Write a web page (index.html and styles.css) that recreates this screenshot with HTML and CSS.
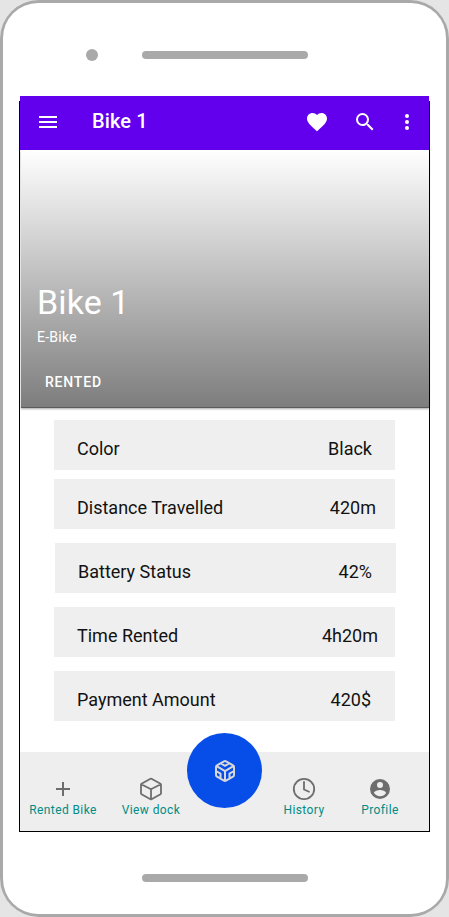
FILE: index.html
```html
<!DOCTYPE html>
<html lang="en">
<head>
<meta charset="utf-8">
<title>Bike 1</title>
<link rel="stylesheet" href="styles.css">
</head>
<body>
<div class="phone">
  <div class="phone-body">
    <div class="phone-top"><span class="camera"></span><span class="speaker"></span></div>
    <main class="screen">
      <header class="app-bar">
        <svg class="icon menu" viewBox="0 0 24 24"><path d="M3 18h18v-2H3v2zm0-5h18v-2H3v2zm0-7v2h18V6H3z"/></svg>
        <h1 class="app-title">Bike 1</h1>
        <svg class="icon heart" viewBox="0 0 24 24"><path d="M12 21.35l-1.45-1.32C5.4 15.36 2 12.28 2 8.5 2 5.42 4.42 3 7.5 3c1.74 0 3.41.81 4.5 2.09C13.09 3.81 14.76 3 16.5 3 19.58 3 22 5.42 22 8.5c0 3.78-3.4 6.86-8.55 11.54L12 21.35z"/></svg>
        <svg class="icon search" viewBox="0 0 24 24"><path d="M15.5 14h-.79l-.28-.27A6.47 6.47 0 0 0 16 9.5 6.5 6.5 0 1 0 9.5 16c1.61 0 3.09-.59 4.23-1.57l.27.28v.79l5 4.99L20.49 19l-4.99-5zm-6 0a4.5 4.5 0 1 1 0-9 4.5 4.5 0 0 1 0 9z"/></svg>
        <svg class="icon more" viewBox="0 0 24 24"><path d="M12 8a2 2 0 1 0 0-4 2 2 0 0 0 0 4zm0 2a2 2 0 1 0 0 4 2 2 0 0 0 0-4zm0 6a2 2 0 1 0 0 4 2 2 0 0 0 0-4z"/></svg>
      </header>
      <section class="hero">
        <h2 class="hero-title">Bike 1</h2>
        <p class="hero-sub">E-Bike</p>
        <span class="hero-action">RENTED</span>
      </section>
      <section class="details">
        <div class="row color"><span>Color</span><span>Black</span></div>
        <div class="row distance"><span>Distance Travelled</span><span>420m</span></div>
        <div class="row battery"><span>Battery Status</span><span>42%</span></div>
        <div class="row time"><span>Time Rented</span><span>4h20m</span></div>
        <div class="row payment"><span>Payment Amount</span><span>420$</span></div>
      </section>
      <nav class="bottom-nav">
        <a class="nav-item rented"><svg class="icon" viewBox="0 0 24 24"><path d="M19 13h-6v6h-2v-6H5v-2h6V5h2v6h6v2z"/></svg><span>Rented Bike</span></a>
        <a class="nav-item dock"><svg class="icon line" viewBox="0 0 24 24"><path d="M22 16.3V7.700a1 1 0 0 0-.5-.9l-9-5.100a1 1 0 0 0-1 0l-9 5.100a1 1 0 0 0-.5.9v8.600a1 1 0 0 0 .5.9l9 5.100a1 1 0 0 0 1 0l9-5.100a1 1 0 0 0 .5-.9zM2.300 7.200L12 12.200l9.700-5M12 22V12.200"/></svg><span>View dock</span></a>
        <a class="fab"><svg class="icon line" viewBox="0 0 24 24"><path d="M21 16V8a2 2 0 0 0-1-1.730l-7-4a2 2 0 0 0-2 0l-7 4A2 2 0 0 0 3 8v8a2 2 0 0 0 1 1.730l7 4a2 2 0 0 0 2 0l7-4A2 2 0 0 0 21 16zM7.500 4.210L12 6.810l4.500-2.600M7.500 19.790V14.600L3 12M21 12l-4.500 2.600v5.190M3.270 6.960L12 12.010l8.730-5.050M12 22.080V12"/></svg></a>
        <a class="nav-item history"><svg class="icon line" viewBox="0 0 24 24"><circle cx="12" cy="12" r="10.200"/><path d="M12 5v7.500l5 2.200"/></svg><span>History</span></a>
        <a class="nav-item profile"><svg class="icon" viewBox="0 0 24 24"><path d="M12 2a10 10 0 1 0 0 20 10 10 0 0 0 0-20zm0 3a3 3 0 1 1 0 6 3 3 0 0 1 0-6zm0 14.200c-2.500 0-4.710-1.280-6-3.220.03-1.990 4-3.080 6-3.080s5.970 1.090 6 3.080a7.200 7.200 0 0 1-6 3.220z"/></svg><span>Profile</span></a>
      </nav>
    </main>
    <span class="speaker bottom"></span>
  </div>
</div>
</body>
</html>
```
FILE: styles.css
```css
* { box-sizing: border-box; }

body {
  margin: 0;
  background: #e5e5e5;
  font-family: Roboto, sans-serif;
}

h1, h2, p { margin: 0; }

.phone {
  width: 449px;
  height: 917px;
  padding: 3px;
  border-radius: 39px;
  background: #a9a9a9;
}

.phone-body {
  height: 911px;
  border-radius: 35px;
  background: #fff;
  display: flex;
  flex-direction: column;
  padding-left: 16px;
}

.phone-top {
  height: 98px;
  flex: none;
  display: flex;
  align-items: flex-start;
  padding: 46px 0 0 67px;
}

.camera {
  width: 12px;
  height: 12px;
  border-radius: 50%;
  background: #a9a9a9;
}

.speaker {
  width: 166px;
  height: 8px;
  margin: 2px 0 0 44px;
  border-radius: 4px;
  background: #a9a9a9;
}

.speaker.bottom { margin: 42px 0 0 123px; }

.screen {
  width: 411px;
  height: 731px;
  flex: none;
  border: 1px solid #000;
  display: flex;
  flex-direction: column;
}

.icon {
  width: 24px;
  height: 24px;
  flex: none;
  display: block;
  fill: currentColor;
}

.icon.line {
  fill: none;
  stroke: currentColor;
  stroke-width: 1.8;
  stroke-linejoin: round;
  stroke-linecap: round;
}

.fab .icon.line { stroke-width: 2; }

.app-bar {
  height: 54px;
  flex: none;
  margin-top: -6px;
  padding: 0 10px 2px 16px;
  display: flex;
  align-items: center;
  background: #6200ee;
  color: #fff;
}

.app-title {
  flex: 1;
  margin: 0 0 2px 32px;
  font-size: 20px;
  line-height: 24px;
  font-weight: 500;
  letter-spacing: .1px;
}

.heart { margin-right: 24px; }
.search { margin-right: 18px; }

.hero {
  height: 258px;
  flex: none;
  margin-left: 1px;
  padding: 132px 16px 0;
  background: linear-gradient(#fff, #7d7d7d);
  box-shadow: 0 1px 2px rgba(0, 0, 0, .35);
  border-bottom: 1px solid #5c5c5c;
  color: #fff;
}

.hero-title {
  font-size: 34px;
  line-height: 40px;
  font-weight: 400;
  letter-spacing: .1px;
}

.hero-sub {
  margin-top: 5px;
  font-size: 14px;
  line-height: 20px;
  letter-spacing: .25px;
}

.hero-action {
  display: block;
  margin: 27px 0 0 8px;
  font-size: 14px;
  line-height: 16px;
  font-weight: 500;
  letter-spacing: .8px;
}

.details {
  flex: 1;
  padding: 12px 0 0 34px;
}

.row {
  width: 341px;
  height: 50px;
  margin-bottom: 14px;
  padding: 8px 23px 0;
  display: flex;
  justify-content: space-between;
  align-items: center;
  background: #efefef;
  color: #121212;
  font-size: 18px;
  line-height: 24px;
}

.color { margin-bottom: 9px; }
.distance { padding-right: 19px; }
.battery { margin-left: 1px; padding-right: 24px; }
.time { padding-right: 17px; }
.payment { padding-right: 24px; }

.bottom-nav {
  height: 79px;
  flex: none;
  display: grid;
  grid-template-columns: 86px 90px 58px 100px 52px;
  justify-content: start;
  align-items: start;
  background: #eee;
  color: #6d6d6d;
}

.nav-item {
  display: flex;
  flex-direction: column;
  align-items: center;
  padding-top: 25px;
  white-space: nowrap;
}

.nav-item span {
  margin-top: 1px;
  color: #018c84;
  font-size: 12px;
  line-height: 16px;
  letter-spacing: .4px;
}

.fab {
  width: 75px;
  height: 75px;
  margin: -19px 0 0 -9px;
  border-radius: 50%;
  display: grid;
  place-items: center;
  background: #074ee8;
  color: #d8d8d8;
}
```
